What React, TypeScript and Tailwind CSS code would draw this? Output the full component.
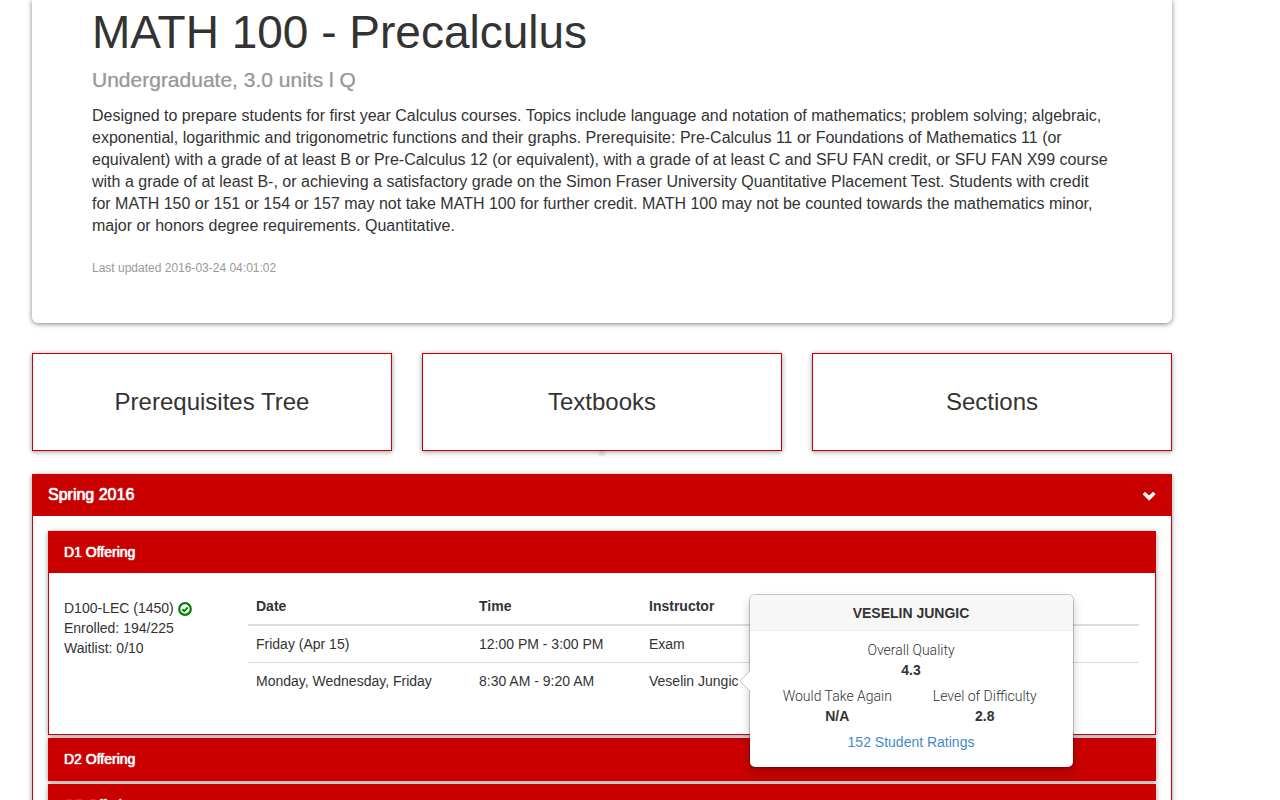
import React from "react";

const description =
  "Designed to prepare students for first year Calculus courses. Topics include language and notation of mathematics; problem solving; algebraic, exponential, logarithmic and trigonometric functions and their graphs. Prerequisite: Pre-Calculus 11 or Foundations of Mathematics 11 (or equivalent) with a grade of at least B or Pre-Calculus 12 (or equivalent), with a grade of at least C and SFU FAN credit, or SFU FAN X99 course with a grade of at least B-, or achieving a satisfactory grade on the Simon Fraser University Quantitative Placement Test. Students with credit for MATH 150 or 151 or 154 or 157 may not take MATH 100 for further credit. MATH 100 may not be counted towards the mathematics minor, major or honors degree requirements. Quantitative.";

function ChevronDown() {
  return (
    <svg aria-hidden="true" viewBox="0 -2 14 12" className="h-[12px] w-[14px] fill-white">
      <path d="M0.6 3.2 3.1 0.7 7.1 4.6 11.1 0.7 13.6 3.2 7.1 9.7Z" />
    </svg>
  );
}

function OpenBadge() {
  return (
    <svg role="img" aria-label="Open" viewBox="0 0 14 14" className="inline-block size-[14px] align-[-3px]">
      <circle cx="7" cy="7" r="5.8" fill="none" stroke="#008000" strokeWidth="2.2" />
      <path d="M4.2 7.2 6.2 9.1 9.8 5.3" fill="none" stroke="#008000" strokeWidth="1.9" />
    </svg>
  );
}

function Stat({ label, value }: { label: string; value: string }) {
  return (
    <div className="flex-1 text-center">
      <dt className="font-['Roboto',sans-serif] font-light">{label}</dt>
      <dd className="font-bold">{value}</dd>
    </div>
  );
}

function RatingPopover() {
  return (
    <div
      role="tooltip"
      className="absolute top-1/2 left-full z-10 ml-[10px] w-[325px] -translate-y-1/2 rounded-md border border-black/20 bg-white bg-clip-padding shadow-[0_5px_10px_rgba(0,0,0,0.2)]"
    >
      <svg aria-hidden="true" viewBox="0 0 12 22" className="absolute top-1/2 right-full h-[22px] w-[12px] -translate-y-1/2 translate-x-px">
        <path d="M12 0 1 11 12 22Z" fill="#fff" />
        <path d="M11.5 0.5 1 11 11.5 21.5" fill="none" stroke="#c8c8c8" />
      </svg>
      <h3 className="rounded-t-[5px] border-b border-[#ebebeb] bg-[#f7f7f7] px-[14px] pt-[9px] pb-2 text-center leading-[18px] font-bold">
        VESELIN JUNGIC
      </h3>
      <div className="flex flex-col gap-[6px] px-[14px] pt-[9px] pb-[15px]">
        <dl className="flex">
          <Stat label="Overall Quality" value="4.3" />
        </dl>
        <dl className="flex">
          <Stat label="Would Take Again" value="N/A" />
          <Stat label="Level of Difficulty" value="2.8" />
        </dl>
        <a href="#ratings" className="text-center text-[#428bca]">
          152 Student Ratings
        </a>
      </div>
    </div>
  );
}

function OfferingHeader({ title }: { title: string }) {
  return (
    <button
      type="button"
      className="block w-full bg-[#ca0000] px-[15px] pt-[10px] pb-[11px] text-left text-white [text-shadow:0_0_1px_#fff,0_0_1px_#fff]"
    >
      {title}
    </button>
  );
}

const panel = "border border-[#ca0000] bg-white shadow-[0_1px_5px_rgba(0,0,0,0.4)]";

export default function App() {
  return (
    <div className="h-screen overflow-hidden bg-white pr-[108px] pl-8 font-['Liberation_Sans',Arial,sans-serif] text-sm text-[#333]">
      <main className="mx-auto max-w-[1140px]">
        <header className="rounded-b-md bg-white px-[60px] pt-[7px] pb-[45px] shadow-[0_1px_5px_rgba(0,0,0,0.5)]">
          <h1 className="text-[46px] leading-[50px]">MATH 100 - Precalculus</h1>
          <p className="mt-[11px] text-[21px] leading-6 text-[#999] [text-shadow:0_0_1px_#bbb]">
            Undergraduate, 3.0 units l Q
          </p>
          <p className="mt-[13px] pr-1 text-base leading-[22px]">{description}</p>
          <p className="mt-[21px] text-xs leading-5 text-[#999]">Last updated 2016-03-24 04:01:02</p>
        </header>

        <nav className="relative mt-[30px] grid grid-cols-3 gap-[30px] text-2xl">
          {["Prerequisites Tree", "Textbooks", "Sections"].map((name) => (
            <button key={name} type="button" className={`${panel} h-[98px]`}>
              {name}
            </button>
          ))}
          <span
            aria-hidden="true"
            className="absolute top-full left-1/2 h-[5px] w-[6px] -translate-x-1/2 bg-black/10 blur-[1px]"
          />
        </nav>

        <section className={`${panel} mt-[23px]`}>
          <button
            type="button"
            className="flex w-full items-center justify-between bg-[#ca0000] px-[15px] pt-[10px] pb-[11px] text-base leading-5 text-white [text-shadow:0_0_1px_#fff,0_0_1px_#fff]"
          >
            Spring 2016
            <ChevronDown />
          </button>
          <div className="flex flex-col gap-[3px] p-[15px]">
            <section className={`${panel} relative z-10`}>
              <OfferingHeader title="D1 Offering" />
              <div className="flex py-[15px] pr-4 pl-[15px]">
                <div className="w-[184px] shrink-0 pt-[10px]">
                  <p>
                    D100-LEC (1450) <OpenBadge />
                  </p>
                  <p>Enrolled: 194/225</p>
                  <p>Waitlist: 0/10</p>
                </div>
                <table className="mb-5 flex-1 table-fixed border-collapse text-left">
                  <thead>
                    <tr className="border-b-2 border-[#ddd]">
                      <th className="w-[223px] p-2">Date</th>
                      <th className="w-[170px] p-2">Time</th>
                      <th className="p-2">Instructor</th>
                    </tr>
                  </thead>
                  <tbody>
                    <tr className="border-b border-[#ddd]">
                      <td className="p-2">Friday (Apr 15)</td>
                      <td className="p-2">12:00 PM - 3:00 PM</td>
                      <td className="p-2">Exam</td>
                    </tr>
                    <tr>
                      <td className="p-2">Monday, Wednesday, Friday</td>
                      <td className="p-2">8:30 AM - 9:20 AM</td>
                      <td className="p-2">
                        <div className="relative w-fit">
                          Veselin Jungic
                          <RatingPopover />
                        </div>
                      </td>
                    </tr>
                  </tbody>
                </table>
              </div>
            </section>
            <section className={panel}>
              <OfferingHeader title="D2 Offering" />
            </section>
            <section className={panel}>
              <OfferingHeader title="OP Offering" />
            </section>
          </div>
        </section>
      </main>
    </div>
  );
}
